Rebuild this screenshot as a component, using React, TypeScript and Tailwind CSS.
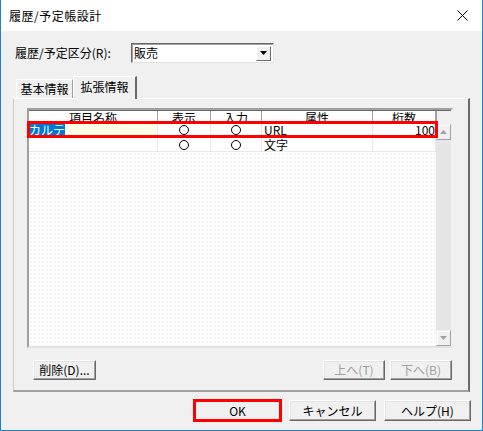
import React from "react";

const font = { fontFamily: '"Noto Sans CJK JP", "Liberation Sans", sans-serif' };

function Btn({ children, w, disabled }: { children: React.ReactNode; w: string; disabled?: boolean }) {
  return (
    <div
      className={`${w} h-full flex items-center justify-center bg-[#f0f0f0] border border-t-white border-l-white border-r-[#696969] border-b-[#696969] shadow-[inset_-1px_-1px_0_#a0a0a0,inset_1px_1px_0_#e3e3e3] text-[12px] leading-none ${disabled ? "text-[#a0a0a0]" : "text-black"}`}
    >
      {children}
    </div>
  );
}

function Circle() {
  return <div className="w-[10px] h-[10px] rounded-full border border-black bg-white" />;
}

function ScrollBtn({ up }: { up?: boolean }) {
  return (
    <div className="h-[16px] w-full flex items-center justify-center bg-[#f0f0f0] border border-t-[#f0f0f0] border-l-[#f0f0f0] border-r-[#a0a0a0] border-b-[#a0a0a0] shadow-[inset_1px_1px_0_#fff]">
      <svg width="7" height="4" viewBox="0 0 7 4">
        {up ? <polygon points="0,4 7,4 3.5,0" fill="#a0a0a0" /> : <polygon points="0,0 7,0 3.5,4" fill="#a0a0a0" />}
      </svg>
    </div>
  );
}

export default function App() {
  return (
    <div style={font} className="w-[483px] h-[431px] bg-[#f0f0f0] border-x border-b border-[#1883d7] flex flex-col text-black">
      {/* Title bar */}
      <div className="h-[31px] bg-white flex items-center justify-between pl-[8px] pr-[14px]">
        <span className="text-[12px] tracking-[0.5px]">履歴/予定帳設計</span>
        <svg width="11" height="11" viewBox="0 0 11 11">
          <line x1="0.5" y1="0.5" x2="10.5" y2="10.5" stroke="#000" strokeWidth="1" />
          <line x1="10.5" y1="0.5" x2="0.5" y2="10.5" stroke="#000" strokeWidth="1" />
        </svg>
      </div>

      {/* Body */}
      <div className="flex-1 flex flex-col pl-[12px]">
        <div className="mt-[12px] h-[20px] flex items-center">
          <span className="pl-[2px] w-[118px] text-[12px]">履歴/予定区分(R):</span>
          <div className="w-[143px] h-[20px] bg-white border border-t-[#696969] border-l-[#696969] border-r-[#e3e3e3] border-b-[#e3e3e3] shadow-[inset_1px_1px_0_#a0a0a0] flex items-center justify-between pl-[2px] pr-[2px]">
            <span className="text-[12px] leading-none">販売</span>
            <div className="w-[15px] h-[15px] bg-[#f0f0f0] border border-t-white border-l-white border-r-[#696969] border-b-[#696969] flex items-center justify-center">
              <svg width="7" height="4" viewBox="0 0 7 4">
                <polygon points="0,0 7,0 3.5,4" fill="#000" />
              </svg>
            </div>
          </div>
        </div>

        {/* Tabs */}
        <div className="mt-[13px] h-[22px] flex items-end pl-[3px] relative z-10">
          <div className="w-[57px] h-[19px] border border-b-0 border-t-white border-l-white border-r-[#a0a0a0] flex items-center justify-center text-[12px] bg-[#f0f0f0]">
            基本情報
          </div>
          <div className="w-[64px] h-[23px] -mb-px border-t border-l border-r-2 border-t-white border-l-white border-r-[#696969] bg-[#f0f0f0] flex items-center justify-center text-[12px] pb-[2px]">
            拡張情報
          </div>
        </div>

        {/* Panel */}
        <div className="w-[457px] h-[294px] border border-t-white border-l-[#c8c8c8] border-r-2 border-b-2 border-r-[#696969] border-b-[#a0a0a0] flex flex-col">
          {/* Grid */}
          <div className="relative mt-[9px] ml-[13px] w-[426px] h-[240px] border-2 border-t-[#a0a0a0] border-l-[#a0a0a0] border-r-[#f0f0f0] border-b-[#e3e3e3] flex bg-white">
            <div className="flex flex-col w-[407px]">
              {/* header */}
              <div className="h-[14px] flex text-[12px] leading-[13px] border-t border-[#696969]">
                <div className="w-[129px] text-center border-r border-[#a0a0a0]">項目名称</div>
                <div className="w-[53px] text-center border-r border-[#a0a0a0]">表示</div>
                <div className="w-[51px] text-center border-r border-[#a0a0a0]">入力</div>
                <div className="w-[111px] text-center border-r border-[#a0a0a0]">属性</div>
                <div className="w-[63px] text-center border-r border-[#a0a0a0]">桁数</div>
              </div>
              {/* row 1 */}
              <div className="h-[14px] flex text-[12px] leading-[12px]">
                <div className="w-[129px] bg-[#ffffe6] border-r border-[#e8e8e8] flex items-start">
                  <span className="bg-[#0078d7] text-white leading-[12px]">カルテ</span>
                </div>
                <div className="w-[53px] border-r border-[#e8e8e8] flex items-center justify-center pb-[2px]"><Circle /></div>
                <div className="w-[51px] border-r border-[#e8e8e8] flex items-center justify-center pb-[2px]"><Circle /></div>
                <div className="w-[111px] border-r border-[#e8e8e8] pl-[2px]">URL</div>
                <div className="w-[63px] text-right pr-[1px]">100</div>
              </div>
              {/* row 2 */}
              <div className="h-[14px] flex text-[12px] leading-[13px] border-b border-[#e8e8e8]">
                <div className="w-[129px] border-r border-[#e8e8e8]" />
                <div className="w-[53px] border-r border-[#e8e8e8] flex items-center justify-center"><Circle /></div>
                <div className="w-[51px] border-r border-[#e8e8e8] flex items-center justify-center"><Circle /></div>
                <div className="w-[111px] border-r border-[#e8e8e8] pl-[2px]">文字</div>
                <div className="w-[63px] border-r border-[#e8e8e8]" />
              </div>
              {/* empty dotted */}
              <div className="flex-1 bg-white bg-[radial-gradient(#e6e6e6_0.6px,transparent_0.8px)] bg-[length:4px_4px]" />
            </div>
            {/* scrollbar */}
            <div className="w-[15px] flex flex-col">
              <div className="h-[14px] border-t border-[#696969] bg-[#f0f0f0] border-l border-l-[#a0a0a0]" />
              <ScrollBtn up />
              <div className="flex-1 bg-[#f6f6f6] bg-[radial-gradient(#e4e4e4_0.7px,transparent_0.8px)] bg-[length:2px_2px]" />
              <ScrollBtn />
            </div>
            {/* annotation */}
            <div className="absolute left-[-2px] top-[11px] w-[411px] h-[17px] border-[3px] border-[#ff0000] pointer-events-none" />
          </div>

          {/* panel buttons */}
          <div className="mt-[12px] h-[20px] flex ml-[19px] mr-[16px]">
            <Btn w="w-[63px]">削除(D)...</Btn>
            <div className="flex-1" />
            <div className="flex gap-[5px]">
              <Btn w="w-[62px]" disabled>上へ(T)</Btn>
              <Btn w="w-[62px]" disabled>下へ(B)</Btn>
            </div>
          </div>
        </div>

        {/* dialog buttons */}
        <div className="mt-[8px] h-[21px] flex justify-end gap-[8px] pr-[11px]">
          <div className="relative h-full">
            <Btn w="w-[87px]">OK</Btn>
            <div className="absolute -inset-[1px] border-[3px] border-[#ff0000] pointer-events-none" />
          </div>
          <Btn w="w-[87px]">キャンセル</Btn>
          <Btn w="w-[87px]">ヘルプ(H)</Btn>
        </div>
      </div>
    </div>
  );
}
